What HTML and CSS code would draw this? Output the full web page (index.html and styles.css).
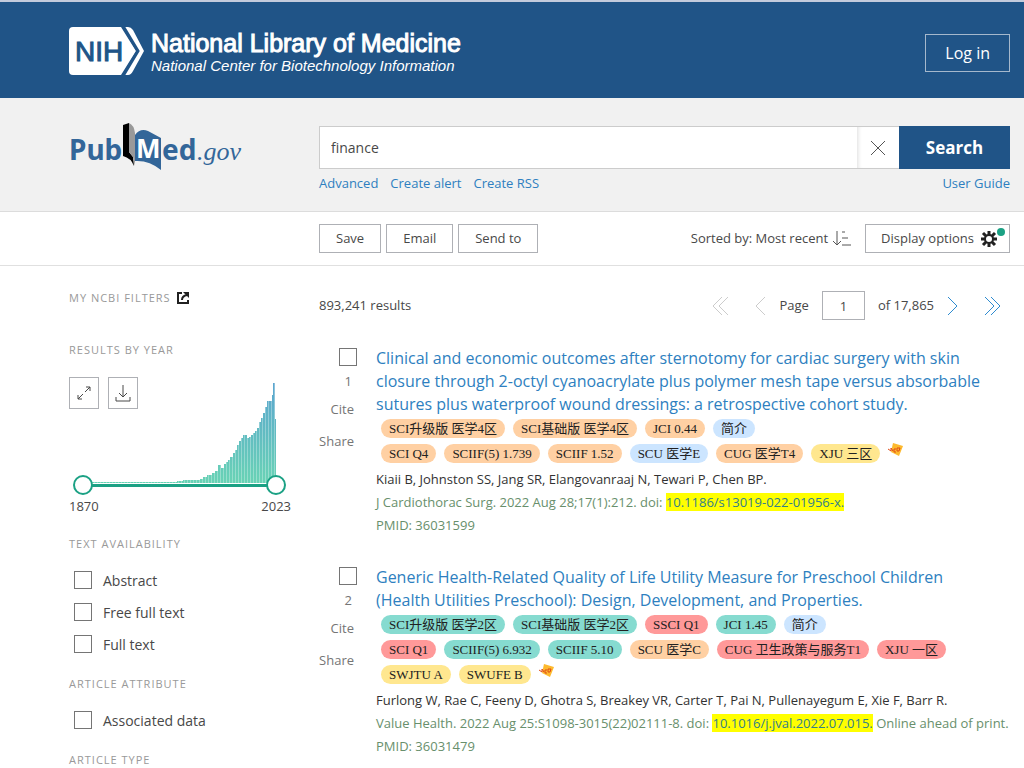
FILE: index.html
```html
<!DOCTYPE html>
<html lang="en">
<head>
    <meta charset="utf-8">
    <title>finance - Search Results - PubMed</title>
    <link rel="stylesheet" href="styles.css">
</head>
<body>
    <header class="ncbi-header">
        <a class="ncbi-logo" href="#">
            <svg width="76" height="50" viewBox="0 0 76 50" aria-hidden="true">
                <path fill="#fff" d="M5 1H53L68 25L53 49H5Q1 49 1 45V5Q1 1 5 1Z"/>
                <path fill="#fff" d="M56 1H60Q63 1 65 4L76 25L65 45Q63 49 60 49H56L70 25Z"/>
                <path stroke="#205487" stroke-width="3" fill="none" d="M55 0L70 25L55 50"/>
                <text x="7" y="35" class="nih-text">NIH</text>
            </svg>
            <span class="ncbi-name">
                <span class="nlm">National Library of Medicine</span>
                <span class="ncbi">National Center for Biotechnology Information</span>
            </span>
        </a>
        <button class="login">Log in</button>
    </header>

    <div class="search-band columns">
        <a class="pubmed-logo" href="#" aria-label="PubMed.gov">
            <svg width="178" height="52" viewBox="0 0 178 52">
                <text x="0" y="40" class="pm-bold">Pub</text>
                <path fill="#000" d="M54 5L60 3V32L64 37L65 46Q62 38 54 36Z"/>
                <path fill="#999" d="M60 3Q65 5 66 13V46L64 37L60 32Z"/>
                <path fill="#336699" d="M66 15Q71 8 79 11L92 18V50Q80 40 66 41Z"/>
                <text x="67" y="38" class="pm-m">M</text>
                <text x="93" y="40" class="pm-bold">ed</text>
                <text x="128" y="40" class="pm-gov">.gov</text>
            </svg>
        </a>
        <form class="search">
            <div class="search-row">
                <input class="term" type="text" value="finance" aria-label="Search term">
                <button class="clear" type="button" aria-label="Clear">
                    <svg width="16" height="16" viewBox="0 0 16 16"><path d="M1 1L15 15M15 1L1 15"/></svg>
                </button>
                <button class="search-btn" type="submit">Search</button>
            </div>
            <div class="search-links">
                <a href="#">Advanced</a>
                <a href="#">Create alert</a>
                <a href="#">Create RSS</a>
                <a class="guide" href="#">User Guide</a>
            </div>
        </form>
    </div>

    <div class="toolbar columns">
        <div class="tools">
            <button class="tool">Save</button>
            <button class="tool">Email</button>
            <button class="tool">Send to</button>
            <button class="sort">Sorted by: Most recent
                <svg width="20" height="18" viewBox="0 0 20 18"><path d="M5 1V15M1 11L5 15L9 11M10 2H13M10 8H16M10 15H19"/></svg>
            </button>
            <button class="tool display">Display options
                <svg width="16" height="16" viewBox="0 0 16 16">
                    <circle cx="8" cy="8" r="4" fill="none" stroke="#212121" stroke-width="2"/>
                    <path stroke="#212121" stroke-width="3" d="M8 0V4M8 12V16M0 8H4M12 8H16M2 2L5 5M11 11L14 14M14 2L11 5M5 11L2 14"/>
                </svg>
                <span class="dot"></span>
            </button>
        </div>
    </div>

    <div class="content columns">
        <aside class="filters">
            <h3 class="ncbi-filters">My NCBI Filters
                <svg width="12" height="12" viewBox="0 0 12 12"><path fill="none" stroke="#212121" stroke-width="2" d="M5 1H1V11H11V8M5 8Q5 4 10 3"/><path fill="#212121" d="M6 0H12V6Z"/></svg>
            </h3>
            <h3>Results by year</h3>
            <div class="timeline">
                <div class="chart-tools">
                    <button aria-label="Expand">
                        <svg width="14" height="14" viewBox="0 0 14 14"><path d="M8 6L13 1M9 1H13V5M6 8L1 13M1 9V13H5"/></svg>
                    </button>
                    <button aria-label="Download">
                        <svg width="16" height="18" viewBox="0 0 16 18"><path d="M8 1V13M4 9L8 13L12 9M1 13V17H15V13"/></svg>
                    </button>
                </div>
                <svg class="chart" viewBox="0 0 213 100" aria-hidden="true">
                    <defs>
                        <linearGradient id="fade" gradientUnits="userSpaceOnUse" x1="0" y1="0" x2="0" y2="100">
                            <stop offset="0" stop-color="#5ba5cf"/>
                            <stop offset="1" stop-color="#69d3b5"/>
                        </linearGradient>
                        <pattern id="gaps" width="3" height="100" patternUnits="userSpaceOnUse">
                            <path fill="#fff" fill-opacity=".3" d="M0 0H1V100H0Z"/>
                        </pattern>
                        <path id="bars" d="M10 100V99H104V98H110V97H127V96H130V94H134V92H139V90H142V88H145V82H148V85H151V81H153V79H155V77H157V74H160V70H162V67H164V62H166V58H168V55H170V52H174V55H176V54H178V52H180V50H182V48H184V45H186V39H188V35H190V30H192V24H194V18H199V12H200V0H202V36H203V100Z"/>
                    </defs>
                    <use href="#bars" fill="url(#fade)"/>
                    <use href="#bars" fill="url(#gaps)"/>
                </svg>
                <div class="slider">
                    <input type="range" min="1870" max="2023" value="1870" aria-label="From year">
                    <input type="range" min="1870" max="2023" value="2023" aria-label="To year">
                </div>
                <div class="years"><span>1870</span><span>2023</span></div>
            </div>
            <h3>Text availability</h3>
            <div class="choices">
                <label><input type="checkbox">Abstract</label>
                <label><input type="checkbox">Free full text</label>
                <label><input type="checkbox">Full text</label>
            </div>
            <h3>Article attribute</h3>
            <div class="choices">
                <label><input type="checkbox">Associated data</label>
            </div>
            <h3>Article type</h3>
        </aside>

        <main class="results">
            <div class="results-top">
                <span>893,241 results</span>
                <div class="pager">
                    <button disabled aria-label="First page"><svg width="18" height="20" viewBox="0 0 18 20"><path d="M11 1L2 10L11 19M17 1L8 10L17 19"/></svg></button>
                    <button class="prev" disabled aria-label="Previous page"><svg width="12" height="20" viewBox="0 0 12 20"><path d="M11 1L2 10L11 19"/></svg></button>
                    <label for="page">Page</label>
                    <input id="page" type="text" value="1">
                    <span>of 17,865</span>
                    <button aria-label="Next page"><svg width="12" height="20" viewBox="0 0 12 20"><path d="M1 1L10 10L1 19"/></svg></button>
                    <button class="last" aria-label="Last page"><svg width="18" height="20" viewBox="0 0 18 20"><path d="M1 1L10 10L1 19M7 1L16 10L7 19"/></svg></button>
                </div>
            </div>

            <article class="result">
                <div class="actions">
                    <input id="pick1" type="checkbox">
                    <label for="pick1">1</label>
                    <button>Cite</button>
                    <button>Share</button>
                </div>
                <div class="docsum">
                    <a class="title" href="#">Clinical and economic outcomes after sternotomy for cardiac surgery with skin closure through 2-octyl cyanoacrylate plus polymer mesh tape versus absorbable sutures plus waterproof wound dressings: a retrospective cohort study.</a>
                    <div class="tags">
                        <span class="tag orange">SCI升级版 医学4区</span>
                        <span class="tag orange">SCI基础版 医学4区</span>
                        <span class="tag orange">JCI 0.44</span>
                        <span class="tag blue">简介</span>
                    </div>
                    <div class="tags">
                        <span class="tag orange">SCI Q4</span>
                        <span class="tag orange">SCIIF(5) 1.739</span>
                        <span class="tag orange">SCIIF 1.52</span>
                        <span class="tag blue">SCU 医学E</span>
                        <span class="tag orange">CUG 医学T4</span>
                        <span class="tag yellow">XJU 三区</span>
                        <svg class="badge" width="15" height="13" viewBox="0 0 15 13"><path fill="#fdb92e" d="M5 0L15 3L11 13L3 9Z"/><path stroke="#df4b16" fill="none" d="M0 6L3 8V5L5 8M8 6H6V9H8M9 8V5H12L11 8Z"/></svg>
                    </div>
                    <p class="authors">Kiaii B, Johnston SS, Jang SR, Elangovanraaj N, Tewari P, Chen BP.</p>
                    <p class="journal">J Cardiothorac Surg. 2022 Aug 28;17(1):212. doi: <a class="doi" href="#">10.1186/s13019-022-01956-x.</a></p>
                    <p class="journal">PMID: 36031599</p>
                </div>
            </article>

            <article class="result">
                <div class="actions">
                    <input id="pick2" type="checkbox">
                    <label for="pick2">2</label>
                    <button>Cite</button>
                    <button>Share</button>
                </div>
                <div class="docsum">
                    <a class="title" href="#">Generic Health-Related Quality of Life Utility Measure for Preschool Children (Health Utilities Preschool): Design, Development, and Properties.</a>
                    <div class="tags">
                        <span class="tag green">SCI升级版 医学2区</span>
                        <span class="tag green">SCI基础版 医学2区</span>
                        <span class="tag red">SSCI Q1</span>
                        <span class="tag green">JCI 1.45</span>
                        <span class="tag blue">简介</span>
                    </div>
                    <div class="tags">
                        <span class="tag red">SCI Q1</span>
                        <span class="tag green">SCIIF(5) 6.932</span>
                        <span class="tag green">SCIIF 5.10</span>
                        <span class="tag orange">SCU 医学C</span>
                        <span class="tag red">CUG 卫生政策与服务T1</span>
                        <span class="tag red">XJU 一区</span>
                    </div>
                    <div class="tags">
                        <span class="tag yellow">SWJTU A</span>
                        <span class="tag yellow">SWUFE B</span>
                        <svg class="badge" width="15" height="13" viewBox="0 0 15 13"><path fill="#fdb92e" d="M5 0L15 3L11 13L3 9Z"/><path stroke="#df4b16" fill="none" d="M0 6L3 8V5L5 8M8 6H6V9H8M9 8V5H12L11 8Z"/></svg>
                    </div>
                    <p class="authors">Furlong W, Rae C, Feeny D, Ghotra S, Breakey VR, Carter T, Pai N, Pullenayegum E, Xie F, Barr R.</p>
                    <p class="journal">Value Health. 2022 Aug 25:S1098-3015(22)02111-8. doi: <a class="doi" href="#">10.1016/j.jval.2022.07.015.</a> Online ahead of print.</p>
                    <p class="journal">PMID: 36031479</p>
                </div>
            </article>
        </main>
    </div>
</body>
</html>
```
FILE: styles.css
```css
*{
    box-sizing: border-box;
}

body{
    margin: 0;
    border-top: 2px solid #c3cbdc;
    background-color: #fff;
    color: #484848;
    font: 13px/23px "Open Sans", "Noto Sans CJK SC", sans-serif;
}

button, input{
    font: inherit;
    color: inherit;
}

button{
    padding: 0;
    border: none;
    background: none;
    cursor: pointer;
}

a{
    color: #2e7fc0;
    text-decoration: none;
}

h3, p{
    margin: 0;
}

svg{
    flex: none;
}

.columns{
    display: grid;
    grid-template-columns: 222px minmax(0, 1fr);
    column-gap: 28px;
    padding: 0 14px 0 69px;
}

/* header */
.ncbi-header{
    display: flex;
    justify-content: space-between;
    align-items: center;
    height: 96px;
    padding: 6px 14px 0 68px;
    background-color: #205487;
}

.ncbi-logo{
    display: flex;
    align-items: center;
    gap: 7px;
    padding-bottom: 4px;
    color: #fff;
    font-family: "Liberation Sans", Arial, sans-serif;
}

.nih-text{
    font: 28px "Liberation Sans", Arial, sans-serif;
    fill: #205487;
    stroke: #205487;
}

.ncbi-name{
    display: flex;
    flex-direction: column;
    padding-top: 4px;
}

.nlm{
    font-size: 25px;
    line-height: 25px;
    -webkit-text-stroke: 1px #fff;
}

.ncbi{
    font-size: 15px;
    font-style: italic;
    line-height: 20px;
}

.login{
    height: 38px;
    padding: 0 19px;
    border: 1px solid #a5b8cc;
    color: #fff;
    font-size: 16px;
}

/* search */
.search-band{
    height: 114px;
    border-bottom: 1px solid #dcdcdc;
    background-color: #f1f1f1;
}

.pubmed-logo{
    margin-top: 22px;
}

.pm-bold{
    font: bold 28px "Noto Sans", sans-serif;
    fill: #336699;
}

.pm-m{
    font: bold 26px "Noto Sans", sans-serif;
    fill: #fff;
}

.pm-gov{
    font: italic 26px "Liberation Serif", serif;
    fill: #336699;
}

.search{
    margin-top: 28px;
}

.search-row{
    display: flex;
    height: 43px;
}

.term{
    flex: 1;
    min-width: 0;
    padding: 0 11px;
    border: 1px solid #ccc;
    border-right: none;
    background-color: #fff;
    font-size: 14px;
}

.clear{
    display: flex;
    align-items: center;
    justify-content: center;
    width: 42px;
    border: solid #ccc;
    border-width: 1px 0;
    background-color: #fff;
    box-shadow: inset 4px 0 4px -3px #ddd;
}

.clear path{
    stroke: #555;
}

.search-btn{
    width: 111px;
    background-color: #205487;
    color: #fff;
    font-size: 17px;
    font-weight: bold;
}

.search-links{
    display: flex;
    gap: 12px;
    padding-top: 3px;
}

.guide{
    margin-left: auto;
}

/* toolbar */
.toolbar{
    height: 54px;
    align-items: center;
    border-bottom: 1px solid #e0e0e0;
}

.tools{
    grid-column: 2;
    display: flex;
    gap: 5px;
}

.tool{
    height: 29px;
    padding: 0 16px;
    border: 1px solid #aeb0b5;
    white-space: nowrap;
}

.sort, .display{
    display: flex;
    align-items: center;
    gap: 4px;
}

.sort{
    margin-left: auto;
    margin-right: 8px;
}

.sort path{
    fill: none;
    stroke: #555;
}

.display{
    position: relative;
    padding: 0 12px 0 15px;
    gap: 7px;
}

.dot{
    position: absolute;
    top: 3px;
    right: 4px;
    width: 8px;
    height: 8px;
    border-radius: 50%;
    background-color: #1ba184;
}

/* filters */
.filters h3{
    color: #999;
    font-size: 11px;
    font-weight: normal;
    line-height: 16px;
    letter-spacing: 1px;
    text-transform: uppercase;
}

.filters{
    padding-top: 24px;
}

.filters .ncbi-filters{
    display: flex;
    align-items: center;
    gap: 6px;
    margin-bottom: 36px;
}

.timeline{
    position: relative;
    padding-top: 25px;
    margin-bottom: 18px;
}

.chart-tools{
    position: absolute;
    top: 19px;
    left: 0;
    display: flex;
    gap: 9px;
}

.chart-tools button{
    display: flex;
    align-items: center;
    justify-content: center;
    width: 30px;
    height: 32px;
    border: 1px solid #aeb0b5;
}

.chart-tools path{
    fill: none;
    stroke: #484848;
}

.chart{
    display: block;
    width: 213px;
    margin-left: 4px;
}

.slider{
    display: grid;
    width: 213px;
    height: 20px;
    margin: -8px 0 0 4px;
    position: relative;
    background: linear-gradient(#1ba184, #1ba184) center / 193px 3px no-repeat;
}

.slider input{
    grid-area: 1 / 1;
    width: 100%;
    height: 20px;
    margin: 0;
    appearance: none;
    background: none;
    pointer-events: none;
}

.slider input::-webkit-slider-thumb{
    appearance: none;
    width: 20px;
    height: 20px;
    border: 2px solid #1ba184;
    border-radius: 50%;
    background-color: #fff;
    pointer-events: auto;
}

.years{
    display: flex;
    justify-content: space-between;
}

.choices{
    display: flex;
    flex-direction: column;
    padding: 12px 0 16px 5px;
}

.choices label{
    display: flex;
    align-items: center;
    gap: 11px;
    height: 32px;
    font-size: 14px;
}

input[type="checkbox"]{
    appearance: none;
    width: 18px;
    height: 18px;
    margin: 0;
    border: 1px solid #757575;
    background-color: #fff;
}

input[type="checkbox"]:checked{
    background-color: #205487;
}

/* results */
.results-top{
    display: flex;
    justify-content: space-between;
    align-items: center;
    height: 29px;
    margin: 25px 0 27px;
}

.pager{
    display: flex;
    align-items: center;
    gap: 13px;
    margin-right: 8px;
}

.pager svg{
    display: block;
}

.pager path{
    fill: none;
    stroke: #2e8bd0;
}

.pager button:disabled path{
    stroke: #ccc;
}

.pager .prev, .pager .last{
    margin-left: 12px;
}

.pager input{
    width: 43px;
    height: 29px;
    border: 1px solid #aeb0b5;
    text-align: center;
}

.result{
    display: grid;
    grid-template-columns: 38px minmax(0, 1fr);
    column-gap: 19px;
    margin-bottom: 29px;
}

.actions{
    display: flex;
    flex-direction: column;
    align-items: flex-end;
    padding-top: 1px;
    color: #757575;
}

.actions label{
    padding: 4px 5px 5px;
}

.actions button{
    margin: 0 3px 9px 0;
}

.title{
    display: block;
    padding-right: 14px;
    font-size: 16px;
}

.tags{
    display: flex;
    align-items: center;
    gap: 8px;
    height: 25px;
    padding-left: 5px;
}

.tag{
    height: 19px;
    padding: 0 8px;
    border-radius: 10px;
    color: #212121;
    font: 13px/19px "Liberation Serif", "Noto Sans CJK SC", serif;
    white-space: nowrap;
}

.orange{
    background-color: #ffd0a3;
}

.blue{
    background-color: #cce5ff;
}

.yellow{
    background-color: #ffe78f;
}

.green{
    background-color: #86dbd0;
}

.red{
    background-color: #ff9999;
}

.badge{
    align-self: flex-start;
    margin-top: 2px;
}

.authors{
    padding-top: 2px;
    color: #323232;
}

.journal{
    color: #688f6c;
}

.doi{
    background-color: #ff0;
    color: #33808a;
}
```
